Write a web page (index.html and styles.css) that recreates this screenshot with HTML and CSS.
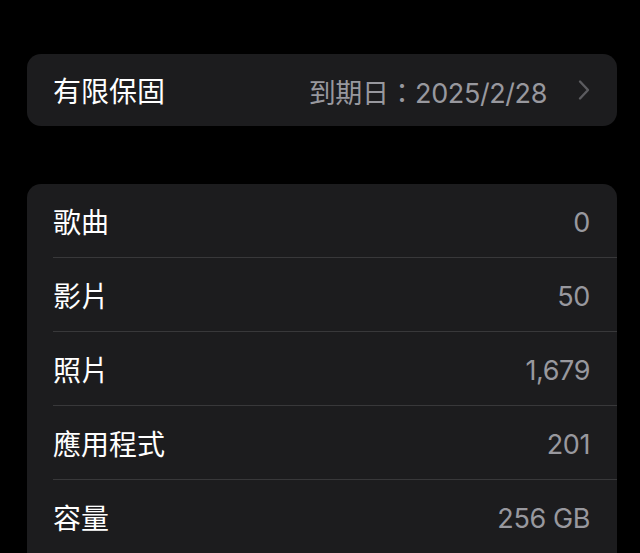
FILE: index.html
```html
<!DOCTYPE html>
<html lang="zh-Hant">
    <head>
        <meta charset="UTF-8" />
        <meta name="viewport" content="width=device-width, initial-scale=1.0" />
        <title>關於本機</title>
        <link rel="stylesheet" href="styles.css">
    </head>
    <body>
        <div class="page">
            <div class="group">
                <div class="row">
                    <span class="label">有限保固</span>
                    <span class="value">到期日：2025/2/28</span>
                    <svg class="chevron" width="12" height="22" viewBox="0 0 12 22">
                        <path d="M2 2.5 L10 11 L2 19.5" fill="none" stroke="currentColor" stroke-width="2.4" stroke-linecap="round" stroke-linejoin="round" />
                    </svg>
                </div>
            </div>

            <div class="group">
                <div class="row">
                    <span class="label">歌曲</span>
                    <span class="value">0</span>
                </div>
                <div class="row">
                    <span class="label">影片</span>
                    <span class="value">50</span>
                </div>
                <div class="row">
                    <span class="label">照片</span>
                    <span class="value">1,679</span>
                </div>
                <div class="row">
                    <span class="label">應用程式</span>
                    <span class="value">201</span>
                </div>
                <div class="row">
                    <span class="label">容量</span>
                    <span class="value">256 GB</span>
                </div>
            </div>
        </div>
    </body>
</html>
```

FILE: styles.css
```css
* {
    margin: 0;
    padding: 0;
    box-sizing: border-box;
}
body {
    background: #000;
    font-family: Inter, "Noto Sans CJK TC", sans-serif;
    color: #fff;
    height: 553px;
    overflow: hidden;
}

.page {
    padding: 54px 23px 0 27px;
    display: flex;
    flex-direction: column;
    gap: 58px;
}

.group {
    background: #1c1c1e;
    border-radius: 14px;
    overflow: hidden;
}
.group + .group {
    padding-bottom: 20px;
}

.row {
    display: flex;
    align-items: center;
    height: 74px;
    margin-left: 26px;
    padding-right: 27px;
    border-top: 1px solid #38383a;
}
.row:first-child {
    border-top: none;
    height: 73px;
}
.group:first-child .row {
    height: 72px;
}

.label {
    flex: 1;
    color: #fff;
    font-size: 28px;
}
.value {
    color: #98989e;
    font-size: 27px;
    letter-spacing: -0.4px;
    padding-top: 3px;
}
.chevron {
    margin-left: 31px;
    color: #5b5b5f;
}
```
